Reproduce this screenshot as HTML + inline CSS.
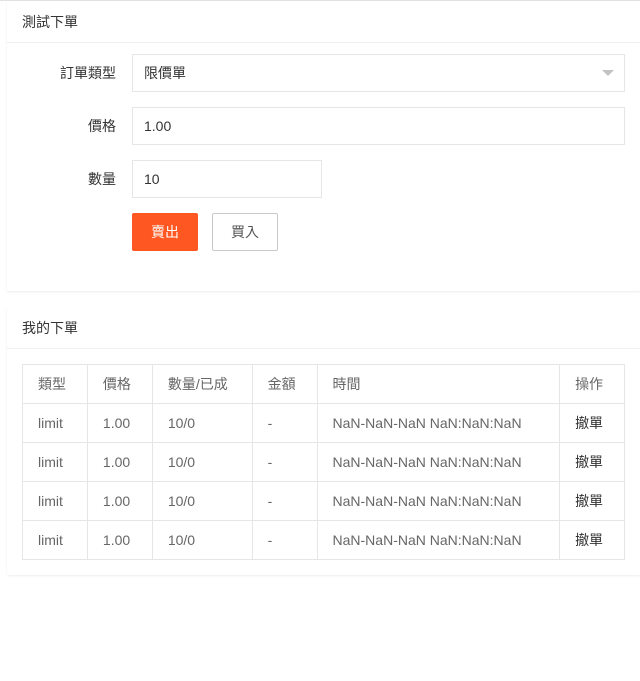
<!DOCTYPE html>
<html><head><meta charset="utf-8"><style>
*{box-sizing:border-box;margin:0;padding:0}
body{width:640px;height:681px;background:#fff;font-family:"Liberation Sans","Noto Sans CJK TC",sans-serif;font-size:14px;color:#333;position:relative;overflow:hidden;border-top:1px solid #e2e2e2}
.card{position:absolute;left:7px;right:0;background:#fff;box-shadow:0 1px 2px rgba(0,0,0,.08)}
.hd{height:42px;line-height:43px;padding-left:15px;border-bottom:1px solid #f0f0f0;font-size:14px;color:#333}
.abs{position:absolute}
.lbl{position:absolute;text-align:right;line-height:38px}
.inp{position:absolute;height:38px;border:1px solid #e6e6e6;line-height:36px;padding-left:11px;color:#333}
.btn{position:absolute;top:212px;height:38px;line-height:36px;text-align:center;font-size:14px}
table{position:absolute;left:15px;top:57px;border-collapse:collapse;width:603px}
td{border:1px solid #e6e6e6;height:39px;padding-left:15px;color:#666;font-size:14px}
</style></head><body>
<div class="card" style="top:0;height:290px">
<div class="hd">測試下單</div>
<div class="lbl" style="top:53px;left:0;width:109px">訂單類型</div>
<div class="inp" style="left:125px;top:53px;width:493px">限價單
<span class="abs" style="right:10px;top:15px;width:0;height:0;border-left:6px solid transparent;border-right:6px solid transparent;border-top:6px solid #c2c2c2"></span></div>
<div class="lbl" style="top:106px;left:0;width:109px">價格</div>
<div class="inp" style="left:125px;top:106px;width:493px">1.00</div>
<div class="lbl" style="top:159px;left:0;width:109px">數量</div>
<div class="inp" style="left:125px;top:159px;width:190px">10</div>
<div class="btn" style="left:125px;width:66px;background:#ff5722;color:#fff;border-radius:2px;line-height:38px">賣出</div>
<div class="btn" style="left:205px;width:66px;border:1px solid #c9c9c9;color:#555;border-radius:2px">買入</div>
</div>
<div class="card" style="top:306px;height:268px">
<div class="hd">我的下單</div>
<table>
<colgroup><col style="width:65px"><col style="width:65px"><col style="width:100px"><col style="width:65px"><col style="width:243px"><col style="width:65px"></colgroup>
<tr><td>類型</td><td>價格</td><td>數量/已成</td><td>金額</td><td>時間</td><td>操作</td></tr>
<tr><td>limit</td><td>1.00</td><td>10/0</td><td>-</td><td>NaN-NaN-NaN NaN:NaN:NaN</td><td style="color:#333">撤單</td></tr>
<tr><td>limit</td><td>1.00</td><td>10/0</td><td>-</td><td>NaN-NaN-NaN NaN:NaN:NaN</td><td style="color:#333">撤單</td></tr>
<tr><td>limit</td><td>1.00</td><td>10/0</td><td>-</td><td>NaN-NaN-NaN NaN:NaN:NaN</td><td style="color:#333">撤單</td></tr>
<tr><td>limit</td><td>1.00</td><td>10/0</td><td>-</td><td>NaN-NaN-NaN NaN:NaN:NaN</td><td style="color:#333">撤單</td></tr>
</table>
</div>
</body></html>
